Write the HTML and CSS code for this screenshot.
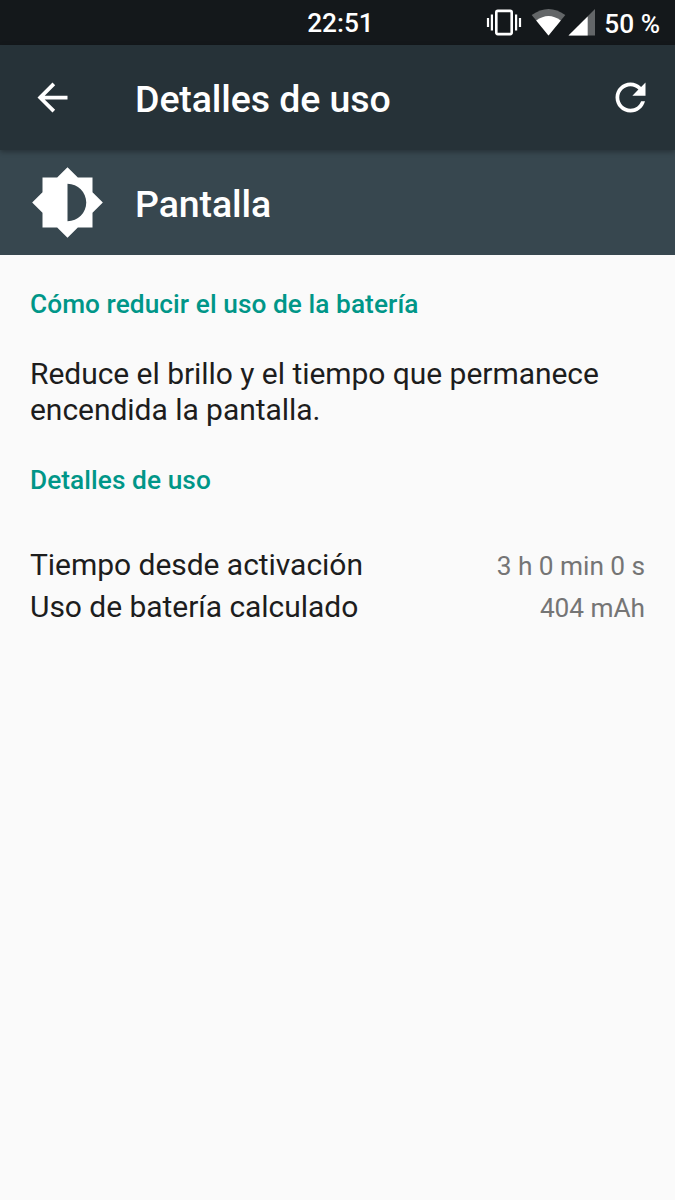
FILE: index.html
```html
<!DOCTYPE html>
<html lang="es">
<head>
    <meta charset="UTF-8">
    <meta name="viewport" content="width=device-width, initial-scale=1.0">
    <title>Detalles de uso</title>
    <link rel="stylesheet" href="styles.css">
</head>
<body>
    <div class="status-bar">
        <span></span>
        <span class="clock">22:51</span>
        <div class="status-icons">
            <svg width="110" height="45" viewBox="0 0 110 45">
                <!-- vibrate -->
                <rect x="11.3" y="10.9" width="15.4" height="23.2" rx="1.5" fill="none" stroke="#fff" stroke-width="2.6"/>
                <path d="M6.9 14.5v16M31.1 14.5v16M3 18v9M35 18v9" stroke="#fff" stroke-width="2.2"/>
                <!-- wifi -->
                <path d="M46.7 15Q63.6 3 80.3 15L63.5 35.5z" fill="#636668"/>
                <path d="M51.2 20.6Q63.5 11.6 75.8 20.6L63.5 35.5z" fill="#fff"/>
                <!-- signal -->
                <path d="M83.5 35.6L110 9.1v26.5z" fill="#636668"/>
                <path d="M83.5 35.6L102.7 16.4v19.2z" fill="#fff"/>
            </svg>
            <span class="battery">50 %</span>
        </div>
    </div>

    <header class="toolbar">
        <svg class="icon" viewBox="0 0 24 24"><path d="M20 11H7.83l5.59-5.59L12 4l-8 8 8 8 1.41-1.41L7.83 13H20v-2z"/></svg>
        <h1>Detalles de uso</h1>
        <svg class="icon" viewBox="0 0 24 24"><path d="M17.65 6.35C16.2 4.9 14.21 4 12 4c-4.42 0-7.99 3.58-7.99 8s3.57 8 7.99 8c3.73 0 6.84-2.55 7.73-6h-2.08c-.82 2.33-3.04 4-5.65 4-3.31 0-6-2.69-6-6s2.69-6 6-6c1.66 0 3.14.69 4.22 1.78L13 11h7V4l-2.35 2.35z"/></svg>
    </header>

    <div class="app-header">
        <svg class="app-icon" viewBox="0 0 24 24"><path d="M20 15.31L23.31 12 20 8.69V4h-4.69L12 .69 8.69 4H4v4.69L.69 12 4 15.31V20h4.69L12 23.31 15.31 20H20v-4.69zM12 18V6c3.31 0 6 2.69 6 6s-2.69 6-6 6z"/></svg>
        <h2>Pantalla</h2>
    </div>

    <main class="content">
        <h3>Cómo reducir el uso de la batería</h3>
        <p class="tip">Reduce el brillo y el tiempo que permanece encendida la pantalla.</p>

        <h3>Detalles de uso</h3>
        <div class="details">
            <div class="row">
                <span>Tiempo desde activación</span>
                <span class="value">3 h 0 min 0 s</span>
            </div>
            <div class="row">
                <span>Uso de batería calculado</span>
                <span class="value">404 mAh</span>
            </div>
        </div>
    </main>
</body>
</html>
```

FILE: styles.css
```css
body {
    margin: 0;
    min-height: 1200px;
    font-family: Roboto, sans-serif;
    background-color: #fafafa;
    color: #1d1d1d;
}

h1, h2, h3, p {
    margin: 0;
}

svg {
    display: block;
    flex-shrink: 0;
}

.status-bar {
    display: grid;
    grid-template-columns: 1fr auto 1fr;
    align-items: start;
    height: 45px;
    padding: 0 15px 0 20px;
    background-color: #14181b;
    color: #fff;
    font-size: 26.25px;
    font-weight: 500;
}

.clock {
    padding-left: 1px;
    line-height: 47px;
}

.status-icons {
    display: flex;
    justify-content: flex-end;
    height: 45px;
    gap: 9px;
}

.battery {
    line-height: 48px;
}

.toolbar {
    position: relative;
    display: flex;
    align-items: center;
    height: 105px;
    padding: 0 22.5px 0 30px;
    background-color: #263238;
    box-shadow: 0 2px 5px rgba(0, 0, 0, 0.3);
}

.icon {
    width: 45px;
    height: 45px;
    fill: #fff;
}

h1, h2 {
    padding-top: 2px;
    color: #fff;
    font-size: 37.5px;
    font-weight: 500;
    line-height: 44px;
    letter-spacing: -0.1px;
}

h1 {
    flex: 1;
    margin-left: 60px;
}

.app-header {
    display: flex;
    align-items: center;
    height: 105px;
    padding: 0 30px;
    background-color: #37474f;
}

.app-icon {
    width: 75px;
    height: 75px;
    fill: #fff;
}

h2 {
    margin-left: 30px;
}

.content {
    padding: 34px 30px 0;
}

h3 {
    color: #009688;
    font-size: 26.25px;
    font-weight: 500;
    line-height: 30px;
    letter-spacing: 0.06px;
}

.tip {
    margin: 37px 0 37px;
    font-size: 30px;
    line-height: 36px;
    letter-spacing: -0.04px;
}

.details {
    margin-top: 49px;
}

.row {
    display: flex;
    justify-content: space-between;
    align-items: baseline;
    height: 42px;
    font-size: 30px;
    line-height: 42px;
    letter-spacing: -0.04px;
}

.value {
    color: #757575;
    font-size: 26.25px;
}
```
